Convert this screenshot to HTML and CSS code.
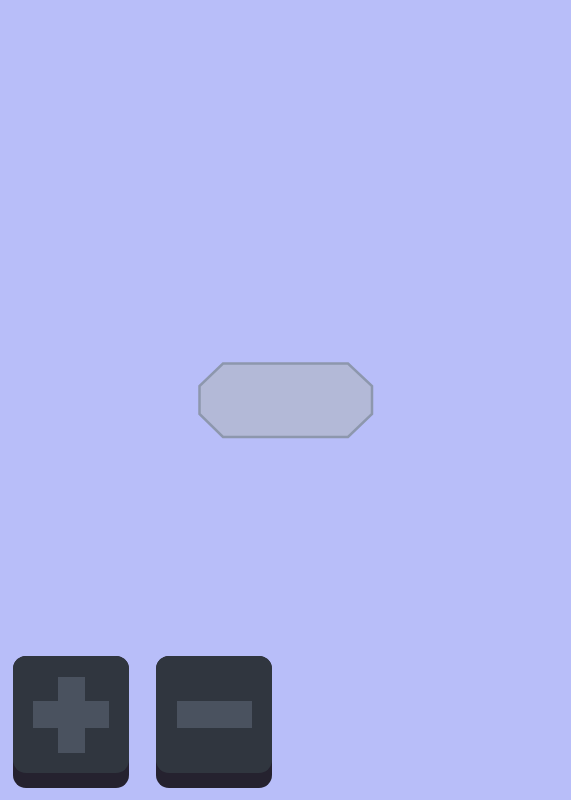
FILE: index.html
```html
<!DOCTYPE html>
<html lang="en">
<head>
<meta charset="utf-8">
<title>Zoom</title>
<link rel="stylesheet" href="styles.css">
</head>
<body>
  <main class="stage">
    <svg class="plate" width="176" height="77" viewBox="0 0 176 77" aria-hidden="true">
      <polygon points="25,1.5 150,1.5 174,24 174,52 150,75 25,75 1.5,52 1.5,24" />
    </svg>
  </main>
  <nav class="controls">
    <button class="key" type="button" aria-label="Zoom in">
      <span class="face">
        <span class="glyph plus"></span>
      </span>
    </button>
    <button class="key" type="button" aria-label="Zoom out">
      <span class="face">
        <span class="glyph minus"></span>
      </span>
    </button>
  </nav>
</body>
</html>
```

FILE: styles.css
```css
html, body {
  margin: 0;
  height: 100%;
}

body {
  background: #b8bef9;
  display: flex;
  flex-direction: column;
  font-family: "Liberation Sans", Arial, sans-serif;
}

/* the plate sits at the centre of the whole window; the controls overlap the lower band */
.stage {
  flex: 1;
  display: flex;
  align-items: center;
  justify-content: center;
  padding-top: 144px;
}

.plate polygon {
  fill: #b3b9d7;
  stroke: #8d97ad;
  stroke-width: 2.5;
  stroke-linejoin: miter;
}

.controls {
  display: flex;
  gap: 27px;
  padding: 0 0 12px 13px;
}

.key {
  width: 116px;
  height: 132px;
  padding: 0;
  border: 0;
  border-radius: 13px;
  background: #25222f;
  display: flex;
  align-items: flex-start;
  cursor: pointer;
}

.face {
  width: 116px;
  height: 117px;
  border-radius: 13px;
  background: #30363f;
  display: flex;
  align-items: center;
  justify-content: center;
}

.glyph {
  position: relative;
  display: block;
  width: 76px;
  height: 27px;
  background: #4a525f;
}

.plus::after {
  content: "";
  position: absolute;
  left: 25px;
  top: -24px;
  width: 27px;
  height: 76px;
  background: #4a525f;
}

.minus {
  width: 75px;
}
```
